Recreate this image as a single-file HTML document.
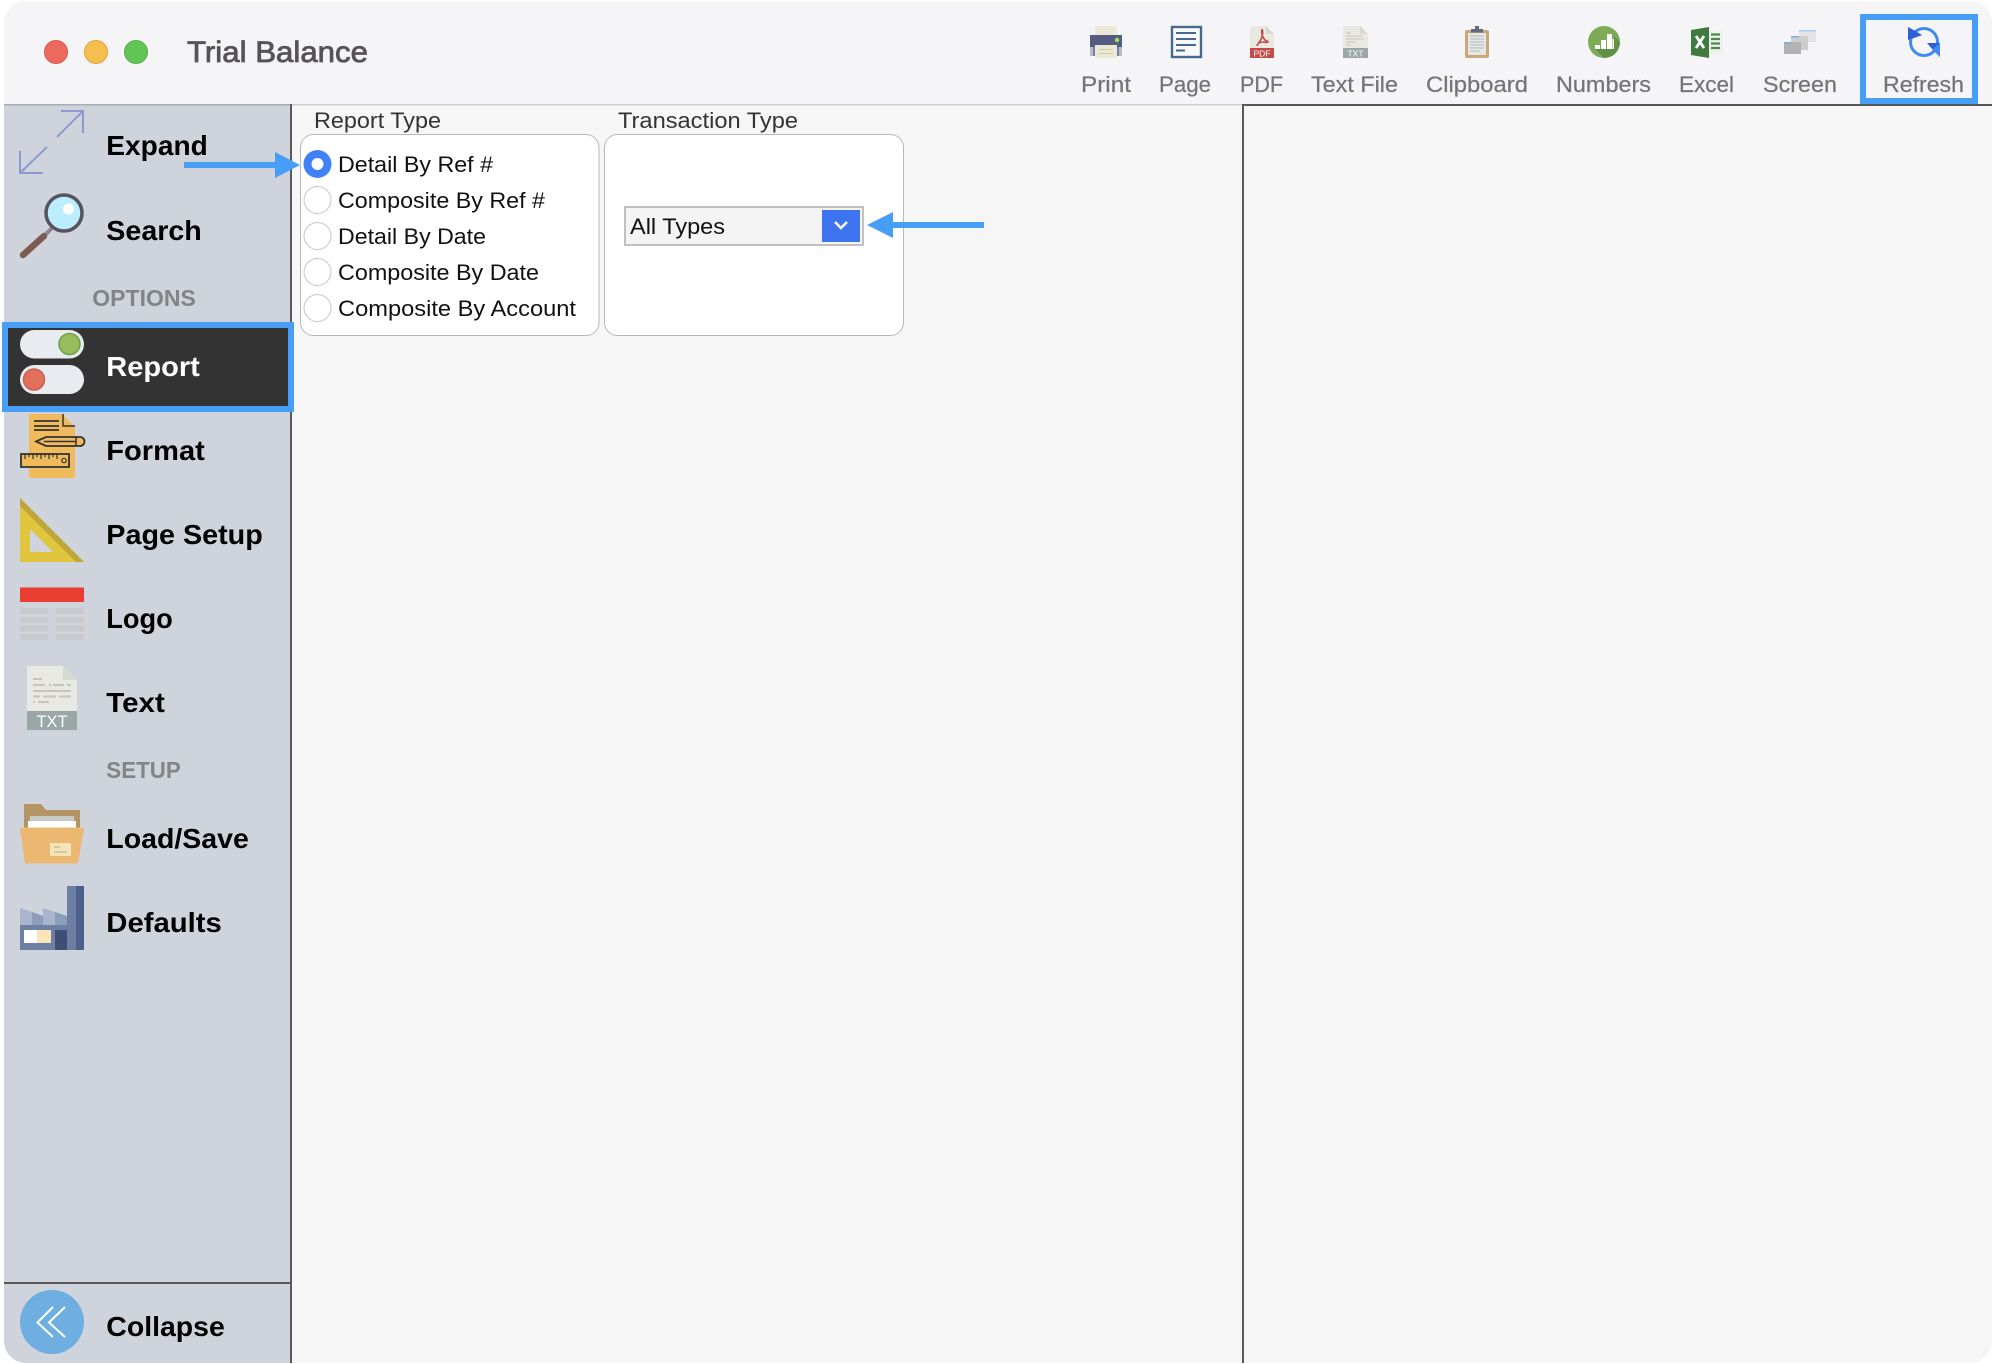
<!DOCTYPE html>
<html lang="en"><head><meta charset="utf-8"><title>Trial Balance</title>
<style>
html,body{margin:0;padding:0;background:#fff;width:1994px;height:1364px;overflow:hidden}
svg{display:block}
text{font-family:"Liberation Sans",sans-serif}
.sb{font-size:28px;font-weight:700;fill:#000}
.sec{font-size:23px;font-weight:700;fill:#838486}
.tb{font-size:22px;fill:#757575;stroke:#757575;stroke-width:.25px}
.lb{font-size:22px;fill:#333}
.op{font-size:22px;fill:#111}
</style></head><body>
<svg width="1994" height="1364" viewBox="0 0 1994 1364" xmlns="http://www.w3.org/2000/svg">
<defs><clipPath id="win"><rect x="4" y="1" width="1988" height="1362" rx="22"/></clipPath></defs>
<g clip-path="url(#win)">
<rect x="4" y="1" width="1988" height="1362" fill="#f6f6f6"/>
<rect x="4" y="1" width="1988" height="103" fill="#f5f4f7"/>
<rect x="4" y="104" width="286" height="1260" fill="#cfd3dc"/>
<rect x="4" y="104" width="286" height="1.5" fill="#a9acb5"/>
<rect x="290" y="104" width="2" height="1260" fill="#585858"/>
<rect x="292" y="104" width="950" height="1.5" fill="#cfcfcf"/>
<rect x="1242" y="104" width="752" height="2" fill="#585858"/>
<rect x="1242" y="104" width="2" height="1260" fill="#585858"/>
<rect x="4" y="1282" width="286" height="2" fill="#585858"/>
</g>
<!-- traffic lights -->
<circle cx="56" cy="52" r="11.5" fill="#ed6a5e" stroke="#d9564b" stroke-width="1"/>
<circle cx="96" cy="52" r="11.5" fill="#f5bf4f" stroke="#dea53b" stroke-width="1"/>
<circle cx="136" cy="52" r="11.5" fill="#61c554" stroke="#52ad46" stroke-width="1"/>
<text x="187" y="62" font-size="30" fill="#555359" stroke="#555359" stroke-width=".8" textLength="181" lengthAdjust="spacingAndGlyphs">Trial Balance</text>

<!-- toolbar: print -->
<rect x="1095" y="26" width="22" height="10" fill="#ece9d8"/>
<rect x="1090" y="35" width="32" height="12" fill="#545d80"/>
<rect x="1090" y="47" width="32" height="9" fill="#b9bcbf"/>
<rect x="1093" y="47" width="26" height="9" fill="#6f7fb8"/>
<rect x="1095" y="45" width="22" height="13" fill="#ece9d2"/>
<rect x="1099" y="49" width="14" height="1" fill="#cfcba8"/><rect x="1099" y="53" width="14" height="1" fill="#cfcba8"/>
<circle cx="1117" cy="40" r="2.2" fill="#a4e05a"/>
<!-- page -->
<rect x="1172" y="27" width="29" height="30" fill="#f9f9fb" stroke="#47698f" stroke-width="2.4"/>
<path d="M1176 33h20M1176 39h20M1176 45h20M1176 50.500h9" stroke="#47698f" stroke-width="2" fill="none"/>
<!-- pdf -->
<path d="M1250 26h16l8 8v24h-24z" fill="#e9e8e1"/><path d="M1266 26l8 8h-8z" fill="#d9d8cc"/>
<rect x="1250" y="48" width="24" height="10" fill="#c44c48"/>
<path d="M1262 29c-1 5 1 9 3 11 1 1 3 1 3 2-2 1-7-1-9 1-1 1-2 2-2 3M1262 29c2 5-1 11-4 15" fill="none" stroke="#c44c48" stroke-width="1.6"/>
<text x="1262" y="56.500" font-size="8.500" fill="#fff" text-anchor="middle">PDF</text>
<!-- txt -->
<path d="M1343 26h17l8 8v24h-25z" fill="#e9e8e1"/><path d="M1360 26l8 8h-8z" fill="#d9d8cc"/>
<path d="M1346 33h5M1346 36h17M1346 39h17M1346 42h9M1346 45h5" stroke="#cfcbc1" stroke-width="1.200" fill="none"/>
<rect x="1343" y="48" width="25" height="10" fill="#9aa7a6"/>
<text x="1355.500" y="56.500" font-size="8.500" fill="#fff" text-anchor="middle">TXT</text>
<!-- clipboard -->
<rect x="1465" y="30" width="24" height="28" rx="2" fill="#c9a878"/>
<rect x="1468" y="33" width="18" height="22" fill="#e6e8e8"/>
<rect x="1471" y="29" width="12" height="3.500" fill="#5f6b7b"/><rect x="1475" y="26" width="4" height="4" fill="#5f6b7b"/>
<path d="M1470 36h14M1470 39h14M1470 42h14M1470 45h14M1470 48h14M1470 51h10" stroke="#b3b7ba" stroke-width="1"/>
<!-- numbers -->
<circle cx="1604" cy="42" r="16" fill="#7dab58"/>
<path d="M1595 49h18l1-13 6 6a16 16 0 0 1-16 16z" fill="#5d8a43" opacity=".85"/>
<path d="M1595 45h5v4h-5zM1601 40h5v9h-5zM1607 34h5v15h-5zM1612.500 39h1.500v10h-1.500z" fill="#fff"/>
<!-- excel -->
<path d="M1691 30l18-3v31l-18-3z" fill="#3f7a3e"/>
<rect x="1709" y="31" width="14" height="24" fill="#eef1f0"/>
<path d="M1711 34.500h9M1711 39h9M1711 43.500h9M1711 48h9" stroke="#4b8a4a" stroke-width="2.200"/>
<path d="M1696 36l8 12M1704 36l-8 12" stroke="#fff" stroke-width="2.800" fill="none"/>
<!-- screen -->
<rect x="1799" y="30" width="17" height="12" fill="#e4e4e6"/><rect x="1799" y="30" width="17" height="1.500" fill="#a9cdf0"/>
<rect x="1791" y="36" width="17" height="14" fill="#cdcdce"/><rect x="1791" y="36" width="8" height="1.500" fill="#7aaede"/>
<rect x="1784" y="42" width="17" height="12" fill="#b2b2b3"/><rect x="1784" y="42" width="7" height="1.500" fill="#7aaede"/>
<!-- refresh -->
<circle cx="1924" cy="42" r="13.500" fill="none" stroke="#3f8cf0" stroke-width="3"/>
<path d="M1908 27v13l14-5z" fill="#3f8cf0"/><path d="M1908 27l14 8-14 5z" fill="#2e5fd6"/>
<path d="M1927 43h13v14l-7-7z" fill="#2e5fd6"/><path d="M1940 43v14l-7-8z" fill="#3f8cf0"/>
<rect x="1863" y="17" width="112" height="84" fill="none" stroke="#479ef6" stroke-width="6"/>

<text class="tb" x="1081" y="92" textLength="50" lengthAdjust="spacingAndGlyphs">Print</text>
<text class="tb" x="1159" y="92" textLength="52" lengthAdjust="spacingAndGlyphs">Page</text>
<text class="tb" x="1240" y="92" textLength="43" lengthAdjust="spacingAndGlyphs">PDF</text>
<text class="tb" x="1311" y="92" textLength="87" lengthAdjust="spacingAndGlyphs">Text File</text>
<text class="tb" x="1426" y="92" textLength="102" lengthAdjust="spacingAndGlyphs">Clipboard</text>
<text class="tb" x="1556" y="92" textLength="95" lengthAdjust="spacingAndGlyphs">Numbers</text>
<text class="tb" x="1679" y="92" textLength="55" lengthAdjust="spacingAndGlyphs">Excel</text>
<text class="tb" x="1763" y="92" textLength="74" lengthAdjust="spacingAndGlyphs">Screen</text>
<text class="tb" x="1883" y="92" textLength="81" lengthAdjust="spacingAndGlyphs">Refresh</text>

<!-- sidebar highlight -->
<rect x="5" y="325" width="286" height="84" fill="#333" stroke="#479ef6" stroke-width="6"/>

<!-- expand -->
<path d="M20 173L47 147M20 151V173H43M57 137L83 111M61 111H83V133" fill="none" stroke="#8c9bcf" stroke-width="2"/>
<!-- search -->
<path d="M44 236L23 255" stroke="#7d5c50" stroke-width="6.500" stroke-linecap="round"/>
<path d="M46 234L52 228" stroke="#8a8790" stroke-width="4"/>
<circle cx="64" cy="213" r="18" fill="#bdeeff" stroke="#57525f" stroke-width="3.500"/>
<circle cx="68.500" cy="209" r="5.500" fill="#fff"/>
<!-- toggles -->
<rect x="20" y="330" width="64" height="28.500" rx="14.250" fill="#e8ebef"/>
<circle cx="69.500" cy="344" r="10.500" fill="#97bb5f" stroke="#749f44" stroke-width="1.500"/>
<rect x="20" y="365" width="64" height="29" rx="14.500" fill="#e8ebef"/>
<circle cx="34" cy="379.500" r="10.500" fill="#e0705c" stroke="#c9604f" stroke-width="1.500"/>
<!-- format -->
<path d="M29 414H62L75 427V478H29z" fill="#f0bb5c"/>
<path d="M63 414V426H75" fill="none" stroke="#333" stroke-width="1.500"/>
<path d="M34 421H59M34 426H59M34 430H59" stroke="#333" stroke-width="1.800"/>
<path d="M46 437H80a4.500 4.500 0 0 1 0 9H46L36 441.500z" fill="#f0bb5c" stroke="#333" stroke-width="1.800"/>
<path d="M44 441.500H76M76 437V446" stroke="#333" stroke-width="1.500"/>
<rect x="21" y="454" width="48" height="13" fill="#f0bb5c" stroke="#333" stroke-width="1.800"/>
<path d="M25 454v5M29 454v3M33 454v5M37 454v3M41 454v5M45 454v3M49 454v5M53 454v3M57 454v5" stroke="#333" stroke-width="1.200"/>
<circle cx="64" cy="460.500" r="2.200" fill="none" stroke="#333" stroke-width="1.200"/>
<!-- page setup -->
<path d="M20 498L84 562H20z" fill="#e0c53f"/>
<path d="M20 498L84 562H76L20 506z" fill="#bfa63a"/>
<path d="M30 529L53 552H30z" fill="#cfd3dc"/>
<!-- logo -->
<rect x="20" y="587.500" width="64" height="14.500" fill="#e93e31"/>
<g fill="#c9cacd">
<rect x="20" y="608" width="28" height="6"/><rect x="56" y="608" width="28" height="6"/>
<rect x="20" y="617" width="28" height="6"/><rect x="56" y="617" width="28" height="6"/>
<rect x="20" y="625.500" width="28" height="6"/><rect x="56" y="625.500" width="28" height="6"/>
<rect x="20" y="634" width="28" height="6"/><rect x="56" y="634" width="28" height="6"/>
</g>
<!-- text -->
<path d="M27 666H63L77 680V711H27z" fill="#e9e9e3"/><path d="M63 666L77 680H63z" fill="#d8d8cc"/>
<path d="M33 679H42M33 685H45M49 685H51M53 685H64M67 685H71M33 691H71M33 696.500H40M43 696.500H56M59 696.500H71M33 702H35M38 702H49" stroke="#c8c4bc" stroke-width="2" fill="none"/>
<rect x="27" y="711" width="50" height="19" rx="1" fill="#9aa7a6"/>
<text x="52" y="727" font-size="17" fill="#fff" text-anchor="middle" textLength="31" lengthAdjust="spacingAndGlyphs">TXT</text>
<!-- load save -->
<path d="M24 804H41L46 810H80V845H24z" fill="#b39465"/>
<rect x="30" y="816" width="44" height="20" fill="#c9c9c7"/>
<rect x="28" y="821" width="48" height="20" fill="#fff"/>
<path d="M20 827.500H84L78 863.500H25z" fill="#ecb871"/>
<rect x="50" y="843" width="21" height="13" fill="#f2e6b8"/>
<path d="M54 847H60M54 852H67" stroke="#cbbf94" stroke-width="1.500"/>
<!-- defaults -->
<path d="M20 908L32 912V926H20z" fill="#a8b5cc"/><path d="M32 912L43 916V926H32z" fill="#8c9cbb"/>
<path d="M43 908L55 912V926H43z" fill="#a8b5cc"/><path d="M55 912L67 916V926H55z" fill="#8c9cbb"/>
<rect x="20" y="925" width="47" height="25" fill="#6d7fa3"/>
<rect x="67" y="886" width="9" height="64" fill="#6d7fa3"/><rect x="76" y="886" width="8" height="64" fill="#4d6089"/>
<rect x="24" y="930" width="13" height="13" fill="#fff"/><rect x="37" y="930" width="14" height="13" fill="#f8e6b8"/>
<rect x="55" y="930" width="12" height="20" fill="#3e4f73"/>
<!-- collapse -->
<circle cx="52" cy="1322" r="32" fill="#6eaee0"/>
<path d="M53 1307L37.500 1322.500L53 1337M65 1307L49 1322.500L65 1337" fill="none" stroke="#fff" stroke-width="2"/>

<text class="sb" x="106.300" y="155" textLength="101.500" lengthAdjust="spacingAndGlyphs">Expand</text>
<text class="sb" x="106.300" y="240" textLength="95.500" lengthAdjust="spacingAndGlyphs">Search</text>
<text class="sec" x="92.300" y="306" textLength="103.500" lengthAdjust="spacingAndGlyphs">OPTIONS</text>
<text class="sb" x="106.300" y="376" textLength="93.500" lengthAdjust="spacingAndGlyphs" style="fill:#fff">Report</text>
<text class="sb" x="106.300" y="460" textLength="98.500" lengthAdjust="spacingAndGlyphs">Format</text>
<text class="sb" x="106.300" y="544" textLength="156.500" lengthAdjust="spacingAndGlyphs">Page Setup</text>
<text class="sb" x="106.300" y="628" textLength="66.500" lengthAdjust="spacingAndGlyphs">Logo</text>
<text class="sb" x="106.300" y="712" textLength="58.500" lengthAdjust="spacingAndGlyphs">Text</text>
<text class="sec" x="106.300" y="778" textLength="74.500" lengthAdjust="spacingAndGlyphs">SETUP</text>
<text class="sb" x="106.300" y="848" textLength="142.500" lengthAdjust="spacingAndGlyphs">Load/Save</text>
<text class="sb" x="106.300" y="932" textLength="115.500" lengthAdjust="spacingAndGlyphs">Defaults</text>
<text class="sb" x="106.300" y="1336" textLength="118.500" lengthAdjust="spacingAndGlyphs">Collapse</text>

<!-- panels -->
<text class="lb" x="314" y="128" textLength="127" lengthAdjust="spacingAndGlyphs">Report Type</text>
<text class="lb" x="618" y="128" textLength="180" lengthAdjust="spacingAndGlyphs">Transaction Type</text>
<rect x="300.500" y="134.500" width="298.500" height="201" rx="13" fill="#fff" stroke="#b8b8b8"/>
<rect x="604.500" y="134.500" width="299" height="201" rx="13" fill="#fff" stroke="#b8b8b8"/>

<circle cx="317.500" cy="164" r="14" fill="#3f82f7"/><circle cx="317.500" cy="164" r="6" fill="#fff"/>
<g fill="#fff" stroke="#c6c6c6">
<circle cx="317.500" cy="200" r="13.500"/><circle cx="317.500" cy="236" r="13.500"/><circle cx="317.500" cy="272" r="13.500"/><circle cx="317.500" cy="308" r="13.500"/>
</g>
<text class="op" x="338" y="172" textLength="155" lengthAdjust="spacingAndGlyphs">Detail By Ref #</text>
<text class="op" x="338" y="208" textLength="207" lengthAdjust="spacingAndGlyphs">Composite By Ref #</text>
<text class="op" x="338" y="244" textLength="148" lengthAdjust="spacingAndGlyphs">Detail By Date</text>
<text class="op" x="338" y="280" textLength="201" lengthAdjust="spacingAndGlyphs">Composite By Date</text>
<text class="op" x="338" y="316" textLength="238" lengthAdjust="spacingAndGlyphs">Composite By Account</text>

<rect x="625" y="207" width="238" height="38" fill="#f4f4f4" stroke="#c0c0c0" stroke-width="2"/>
<rect x="822" y="210" width="38" height="32" fill="#3e74f2"/>
<path d="M835 222l6 6 6-6" fill="none" stroke="#fff" stroke-width="2.500"/>
<text class="op" x="630" y="234" textLength="95" lengthAdjust="spacingAndGlyphs">All Types</text>

<!-- arrows -->
<path d="M184 162H275V152L300 165L275 178V168H184z" fill="#479ef6"/>
<path d="M867 225L893 212V222H984V228H893V238z" fill="#479ef6"/>
</svg>
</body></html>
